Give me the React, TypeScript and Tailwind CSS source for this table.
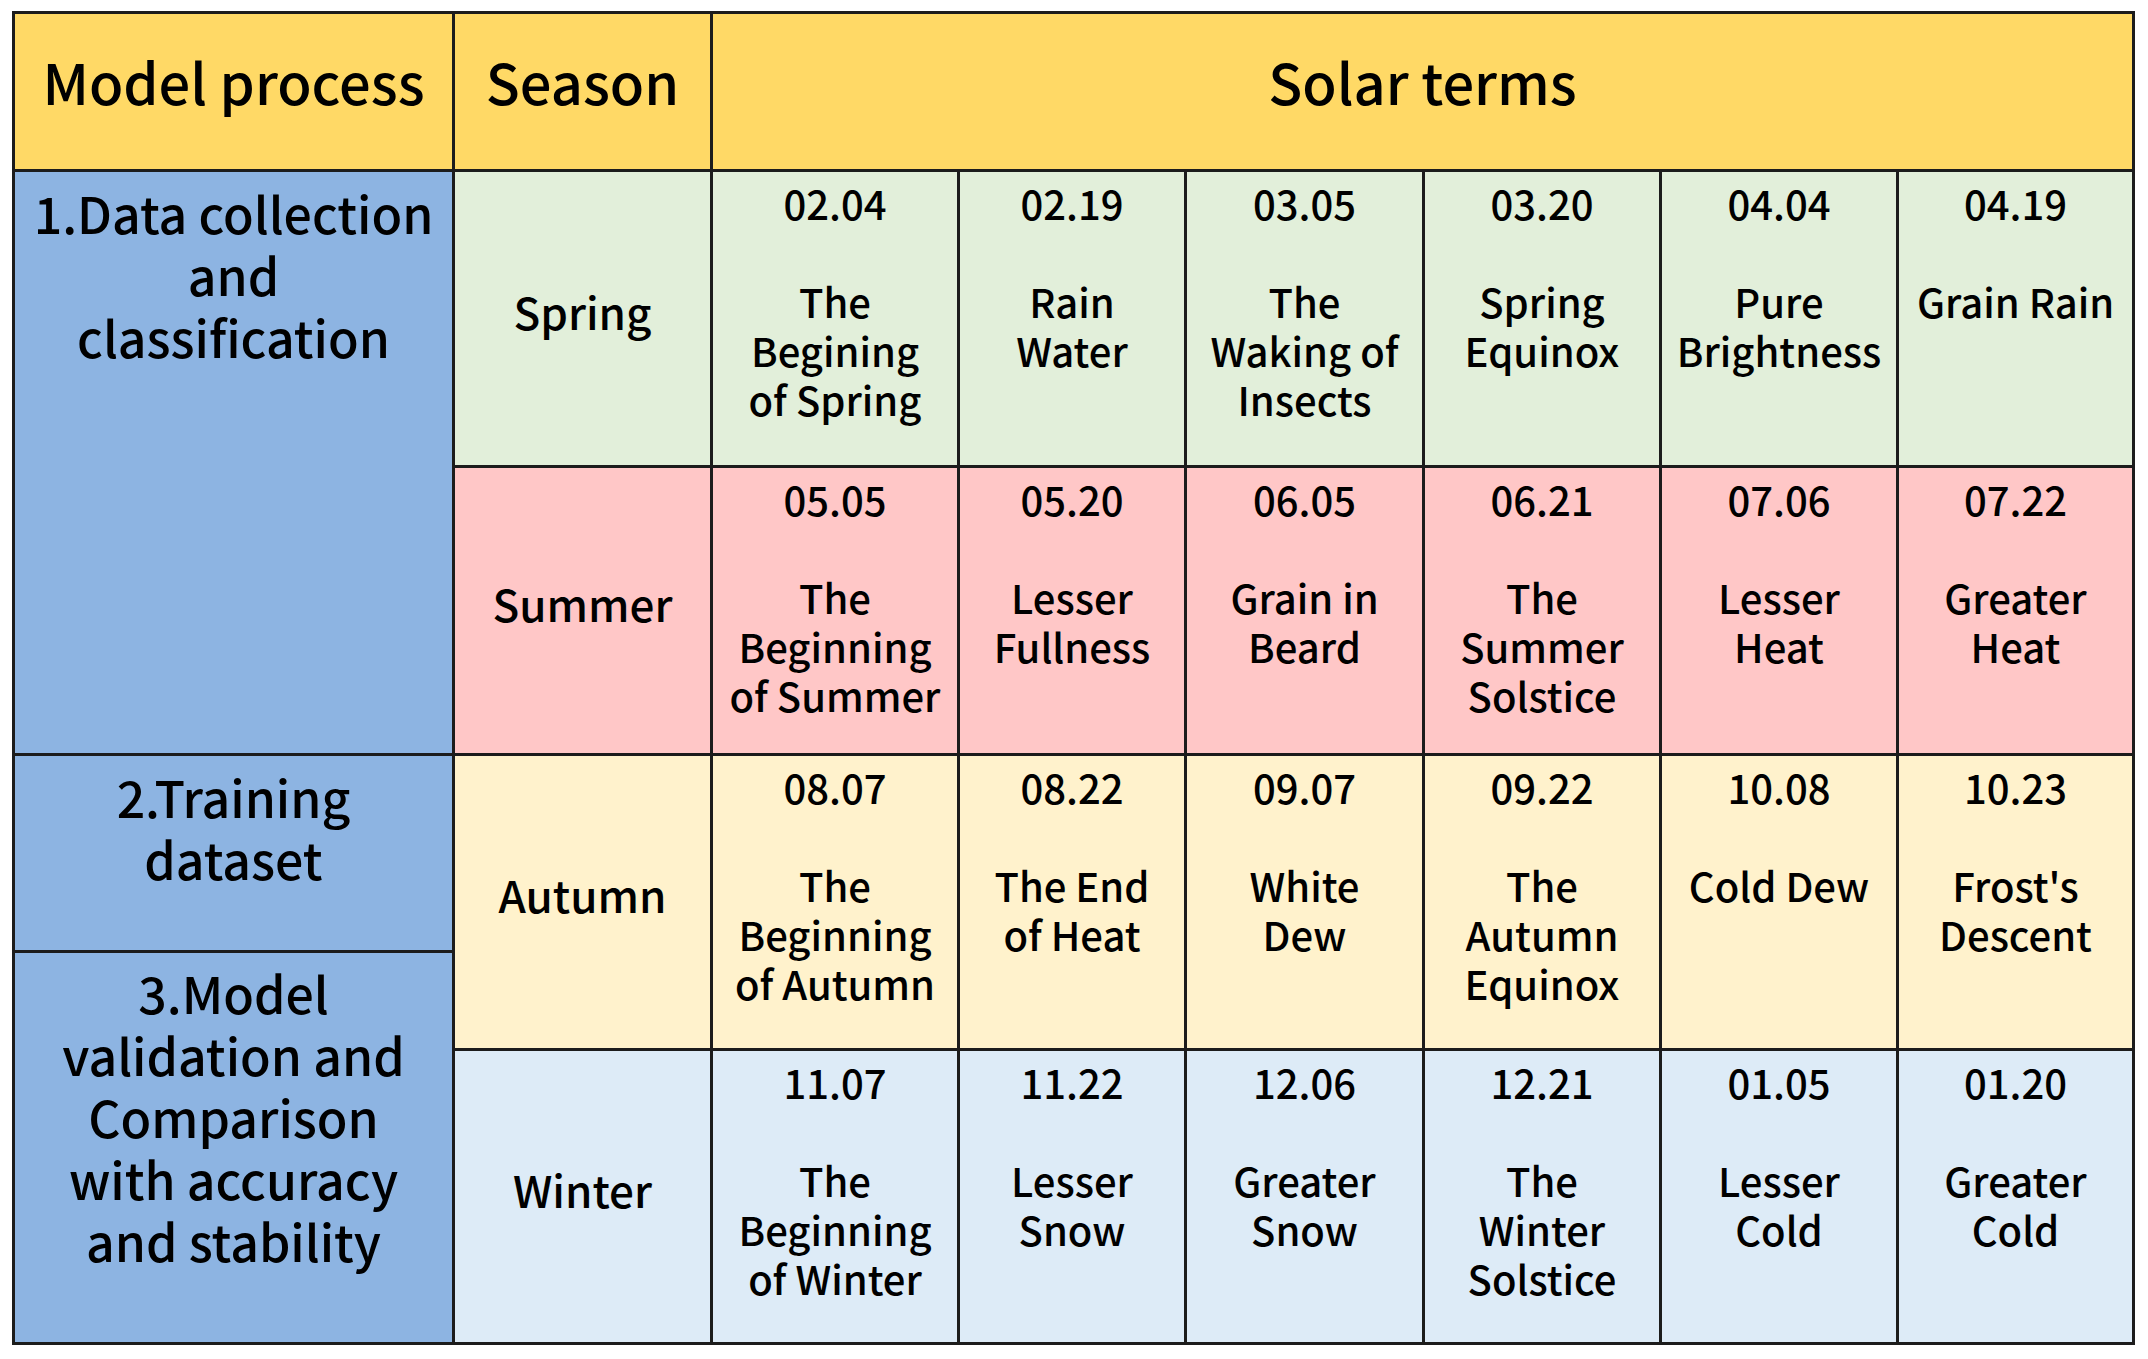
import React from "react";

type Term = { date: string; name: string[] };

const seasons: { name: string; bg: string; terms: Term[] }[] = [
  {
    name: "Spring",
    bg: "bg-[#e2efda]",
    terms: [
      { date: "02.04", name: ["The", "Begining", "of Spring"] },
      { date: "02.19", name: ["Rain", "Water"] },
      { date: "03.05", name: ["The", "Waking of", "Insects"] },
      { date: "03.20", name: ["Spring", "Equinox"] },
      { date: "04.04", name: ["Pure", "Brightness"] },
      { date: "04.19", name: ["Grain Rain"] },
    ],
  },
  {
    name: "Summer",
    bg: "bg-[#ffc7c7]",
    terms: [
      { date: "05.05", name: ["The", "Beginning", "of Summer"] },
      { date: "05.20", name: ["Lesser", "Fullness"] },
      { date: "06.05", name: ["Grain in", "Beard"] },
      { date: "06.21", name: ["The", "Summer", "Solstice"] },
      { date: "07.06", name: ["Lesser", "Heat"] },
      { date: "07.22", name: ["Greater", "Heat"] },
    ],
  },
  {
    name: "Autumn",
    bg: "bg-[#fff2cc]",
    terms: [
      { date: "08.07", name: ["The", "Beginning", "of Autumn"] },
      { date: "08.22", name: ["The End", "of Heat"] },
      { date: "09.07", name: ["White", "Dew"] },
      { date: "09.22", name: ["The", "Autumn", "Equinox"] },
      { date: "10.08", name: ["Cold Dew"] },
      { date: "10.23", name: ["Frost's", "Descent"] },
    ],
  },
  {
    name: "Winter",
    bg: "bg-[#ddebf7]",
    terms: [
      { date: "11.07", name: ["The", "Beginning", "of Winter"] },
      { date: "11.22", name: ["Lesser", "Snow"] },
      { date: "12.06", name: ["Greater", "Snow"] },
      { date: "12.21", name: ["The", "Winter", "Solstice"] },
      { date: "01.05", name: ["Lesser", "Cold"] },
      { date: "01.20", name: ["Greater", "Cold"] },
    ],
  },
];

const font = { fontFamily: '"Noto Sans CJK SC", "Noto Sans", sans-serif' };

export default function App() {
  return (
    <div className="w-[2148px] h-[1359px] bg-white pt-[11px] pl-[12px] font-medium" style={font}>
      <div className="w-[2123px] bg-[#1c1c1c] p-[3px] flex gap-[3px] text-black">
        {/* Model process column */}
        <div className="w-[437px] flex flex-col gap-[3px]">
          <div className="h-[155px] bg-[#ffd966] flex items-center justify-center text-[56px] leading-none pb-[22px] whitespace-nowrap">
            Model process
          </div>
          <div className="h-[581px] bg-[#8db4e2] text-center text-[50px] leading-[62px] pt-[9px] whitespace-nowrap">
            <div>1.Data collection</div>
            <div>and</div>
            <div>classification</div>
          </div>
          <div className="h-[194px] bg-[#8db4e2] text-center text-[50px] leading-[62px] pt-[9px]">
            <div>2.Training</div>
            <div>dataset</div>
          </div>
          <div className="h-[389px] bg-[#8db4e2] text-center text-[50px] leading-[62px] pt-[8px] whitespace-nowrap">
            <div>3.Model</div>
            <div>validation and</div>
            <div>Comparison</div>
            <div>with accuracy</div>
            <div>and stability</div>
          </div>
        </div>
        {/* Season + terms grid */}
        <div className="grid grid-cols-[255px_244px_224px_235px_234px_234px_233px] grid-rows-[155px_293px_285px_292px_291px] gap-[3px]">
          <div className="bg-[#ffd966] flex items-center justify-center text-[56px] leading-none pb-[22px]">
            Season
          </div>
          <div className="col-span-6 bg-[#ffd966] flex items-center justify-center text-[56px] leading-none pb-[22px]">
            Solar terms
          </div>
          {seasons.map((s) => (
            <React.Fragment key={s.name}>
              <div className={`${s.bg} flex items-center justify-center text-[44px] leading-none pb-[16px]`}>
                {s.name}
              </div>
              {s.terms.map((t) => (
                <div key={t.date} className={`${s.bg} text-center text-[40px] leading-[49px] pt-[7px] whitespace-nowrap`}>
                  <div>{t.date}</div>
                  <div>&nbsp;</div>
                  {t.name.map((n, i) => (
                    <div key={i}>{n}</div>
                  ))}
                </div>
              ))}
            </React.Fragment>
          ))}
        </div>
      </div>
    </div>
  );
}
